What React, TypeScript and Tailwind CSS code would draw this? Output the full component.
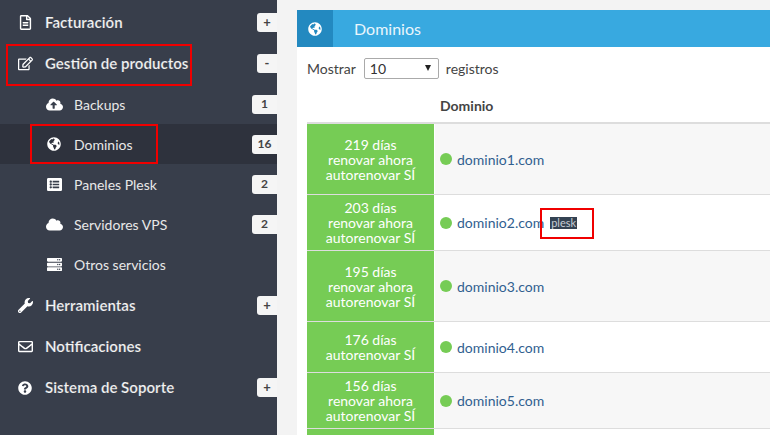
import React from "react";
import {
  FaRegFileAlt,
  FaRegEdit,
  FaCloudUploadAlt,
  FaGlobeAmericas,
  FaListAlt,
  FaCloud,
  FaServer,
  FaWrench,
  FaRegEnvelope,
  FaQuestionCircle,
} from "react-icons/fa";

function Top({ icon, label, sign }: { icon: React.ReactNode; label: string; sign?: string }) {
  return (
    <div className="relative flex h-[41px] items-center">
      <div className="flex w-[45px] justify-center pl-[5px] text-white text-[15px]">{icon}</div>
      <span className="text-[15px] font-bold text-[#f4f4f4] [-webkit-text-stroke:0.2px_#383e4b]">{label}</span>
      {sign && (
        <span className="ml-auto flex h-[19px] w-[20px] items-center justify-center rounded-l-[3px] bg-[#f5f5f5] text-[13px] font-bold text-[#444]">
          {sign}
        </span>
      )}
    </div>
  );
}

function Sub({
  icon,
  label,
  count,
  active,
}: {
  icon: React.ReactNode;
  label: string;
  count?: string;
  active?: boolean;
}) {
  return (
    <div className={`flex h-[40px] items-center ${active ? "bg-[#2e323d]" : ""}`}>
      <div className="flex w-[74px] justify-center pl-[34px] pr-[0px] text-white text-[15px]">{icon}</div>
      <span className="text-[14px] text-[#e8e8e8]">{label}</span>
      {count && (
        <span className="ml-auto flex h-[19px] w-[25px] items-center justify-center rounded-l-[3px] bg-[#f5f5f5] text-[12px] font-bold text-[#444]">
          {count}
        </span>
      )}
    </div>
  );
}

function Row({
  lines,
  name,
  h,
  odd,
  plesk,
}: {
  lines: string[];
  name: string;
  h: string;
  odd?: boolean;
  plesk?: boolean;
}) {
  return (
    <div className={`flex border-b border-[#dddddd] ${h} ${odd ? "bg-[#f7f7f7]" : "bg-white"}`}>
      <div className="flex w-[128px] flex-col items-center justify-center border-r border-white bg-[#76cc55] text-[14px] leading-[15px] text-white">
        {lines.map((l) => (
          <span key={l}>{l}</span>
        ))}
      </div>
      <div className="flex items-center pl-[5px] text-[14px] text-[#31608f]">
        <span className="mr-[5px] h-[12px] w-[12px] rounded-full bg-[#76cc55]" />
        <span>{name}</span>
        {plesk && (
          <span className="ml-[6px] bg-[#344252] px-[1px] text-[11px] leading-[12px] text-[#c8ced6]">plesk</span>
        )}
      </div>
    </div>
  );
}

export default function App() {
  return (
    <div className="relative flex h-[435px] w-[770px] overflow-hidden bg-[#f3f3f3] font-['Lato','Liberation_Sans',sans-serif]">
      <aside className="w-[277px] shrink-0 bg-[#383e4b] pt-[2px]">
        <Top icon={<FaRegFileAlt />} label="Facturación" sign="+" />
        <Top icon={<FaRegEdit />} label="Gestión de productos" sign="-" />
        <Sub icon={<FaCloudUploadAlt className="text-[17px]" />} label="Backups" count="1" />
        <Sub icon={<FaGlobeAmericas className="text-[14px]" />} label="Dominios" count="16" active />
        <Sub icon={<FaListAlt />} label="Paneles Plesk" count="2" />
        <Sub icon={<FaCloud className="text-[17px]" />} label="Servidores VPS" count="2" />
        <Sub icon={<FaServer />} label="Otros servicios" />
        <div className="mt-[1px]">
          <Top icon={<FaWrench />} label="Herramientas" sign="+" />
          <Top icon={<FaRegEnvelope />} label="Notificaciones" />
          <Top icon={<FaQuestionCircle className="text-[14px]" />} label="Sistema de Soporte" sign="+" />
        </div>
      </aside>

      <main className="min-w-0 flex-1 overflow-hidden pl-[20px] pt-[10px]">
        <section className="h-[500px] w-[520px] bg-white">
          <header className="flex h-[37px] items-center bg-[#38a9e0] text-white">
            <div className="flex h-full w-[36px] items-center justify-center bg-[#2389c0] text-[14px]">
              <FaGlobeAmericas />
            </div>
            <h1 className="ml-[21px] text-[16px] text-[#eaf6fc]">Dominios</h1>
          </header>
          <div className="px-[10px]">
            <div className="flex h-[42px] items-center text-[14px] text-[#444] pt-[1px]">
              <span>Mostrar</span>
              <div className="relative ml-[8px] flex h-[21px] w-[75px] items-center rounded-[2px] border border-[#aaaaaa] bg-white pl-[5px] text-[#333]">
                10
                <span className="absolute right-[7px] top-[6px] h-0 w-0 border-x-[3.5px] border-t-[6px] border-x-transparent border-t-[#222]" />
              </div>
              <span className="ml-[7px]">registros</span>
            </div>
            <div className="flex h-[33px] items-center border-b-2 border-[#dddddd] pl-[133px] text-[14px] font-bold text-[#444] box-content pt-[-1px]">
              Dominio
            </div>
            <Row odd h="h-[71px]" lines={["219 días", "renovar ahora", "autorenovar SÍ"]} name="dominio1.com" />
            <Row h="h-[56px]" lines={["203 días", "renovar ahora", "autorenovar SÍ"]} name="dominio2.com" plesk />
            <Row odd h="h-[71px]" lines={["195 días", "renovar ahora", "autorenovar SÍ"]} name="dominio3.com" />
            <Row h="h-[51px]" lines={["176 días", "autorenovar SÍ"]} name="dominio4.com" />
            <Row odd h="h-[56px]" lines={["156 días", "renovar ahora", "autorenovar SÍ"]} name="dominio5.com" />
            <Row h="h-[56px]" lines={[""]} name="" />
          </div>
        </section>
      </main>

      <div className="absolute left-[6px] top-[44px] h-[42px] w-[186px] border-2 border-[#f00000]" />
      <div className="absolute left-[30px] top-[124px] h-[40px] w-[128px] border-2 border-[#f00000]" />
      <div className="absolute left-[540px] top-[208px] h-[31px] w-[54px] border-2 border-[#f00000]" />
    </div>
  );
}
